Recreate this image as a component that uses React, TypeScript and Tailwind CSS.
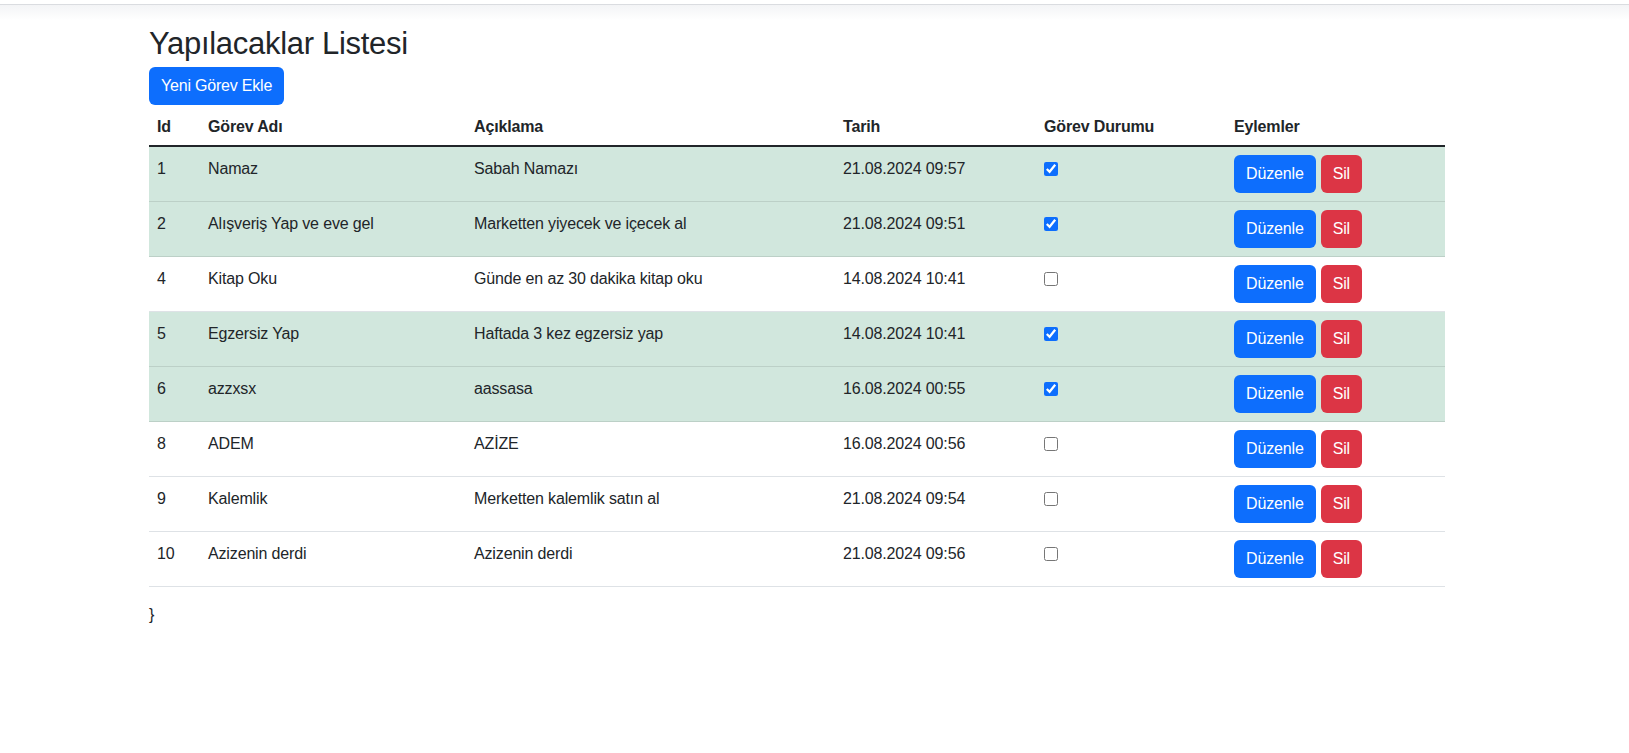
import React from 'react';

const tasks = [
  { id: 1, name: 'Namaz', desc: 'Sabah Namazı', date: '21.08.2024 09:57', done: true },
  { id: 2, name: 'Alışveriş Yap ve eve gel', desc: 'Marketten yiyecek ve içecek al', date: '21.08.2024 09:51', done: true },
  { id: 4, name: 'Kitap Oku', desc: 'Günde en az 30 dakika kitap oku', date: '14.08.2024 10:41', done: false },
  { id: 5, name: 'Egzersiz Yap', desc: 'Haftada 3 kez egzersiz yap', date: '14.08.2024 10:41', done: true },
  { id: 6, name: 'azzxsx', desc: 'aassasa', date: '16.08.2024 00:55', done: true },
  { id: 8, name: 'ADEM', desc: 'AZİZE', date: '16.08.2024 00:56', done: false },
  { id: 9, name: 'Kalemlik', desc: 'Merketten kalemlik satın al', date: '21.08.2024 09:54', done: false },
  { id: 10, name: 'Azizenin derdi', desc: 'Azizenin derdi', date: '21.08.2024 09:56', done: false },
];

export default function App() {
  return (
    <div className="relative min-h-screen bg-white text-[#212529] font-['Liberation_Sans',Arial,sans-serif] text-base">
      {/* top strip */}
      <div className="h-[4px] bg-white"></div>
      <div className="h-[16px] border-t border-[#dadce0] bg-gradient-to-b from-[#f3f4f6] to-white"></div>

      <div className="ml-[149px] w-[1296px]">
        <h2 className="text-[31px] leading-[36px] font-normal tracking-[-0.3px] mb-[5px] mt-[6px]">Yapılacaklar Listesi</h2>
        <button className="h-[38px] px-3 rounded-[6px] bg-[#0d6efd] text-white leading-6 tracking-[-0.2px]">Yeni Görev Ekle</button>

        <table className="w-full border-collapse mb-4 tracking-[-0.15px]">
          <thead>
            <tr className="border-b-2 border-[#212529]">
              <th className="w-[51px] px-2 pt-[10px] pb-[6px] text-left font-bold leading-6">Id</th>
              <th className="w-[266px] px-2 pt-[10px] pb-[6px] text-left font-bold leading-6">Görev Adı</th>
              <th className="w-[369px] px-2 pt-[10px] pb-[6px] text-left font-bold leading-6">Açıklama</th>
              <th className="w-[201px] px-2 pt-[10px] pb-[6px] text-left font-bold leading-6">Tarih</th>
              <th className="w-[190px] px-2 pt-[10px] pb-[6px] text-left font-bold leading-6">Görev Durumu</th>
              <th className="w-[219px] px-2 pt-[10px] pb-[6px] text-left font-bold leading-6">Eylemler</th>
            </tr>
          </thead>
          <tbody>
            {tasks.map(t => (
              <tr
                key={t.id}
                className={t.done ? 'bg-[#d1e7dd] border-b border-[#bcd0c7]' : 'bg-white border-b border-[#dee2e6]'}
              >
                <td className="px-2 pt-[10px] pb-[6px] align-top leading-6">{t.id}</td>
                <td className="px-2 pt-[10px] pb-[6px] align-top leading-6">{t.name}</td>
                <td className="px-2 pt-[10px] pb-[6px] align-top leading-6">{t.desc}</td>
                <td className="px-2 pt-[10px] pb-[6px] align-top leading-6">{t.date}</td>
                <td className="px-2 py-2 align-top leading-6">
                  <input
                    type="checkbox"
                    defaultChecked={t.done}
                    className="block m-0 mt-[7px] w-[14px] h-[14px] accent-[#0d6efd]"
                  />
                </td>
                <td className="px-2 py-2 align-top leading-6">
                  <div className="flex gap-[5px]">
                    <button className="h-[38px] px-3 rounded-[6px] bg-[#0d6efd] text-white">Düzenle</button>
                    <button className="h-[38px] px-3 rounded-[6px] bg-[#dc3545] text-white">Sil</button>
                  </div>
                </td>
              </tr>
            ))}
          </tbody>
        </table>

        <div className="leading-6">{'}'}</div>
      </div>
    </div>
  );
}
